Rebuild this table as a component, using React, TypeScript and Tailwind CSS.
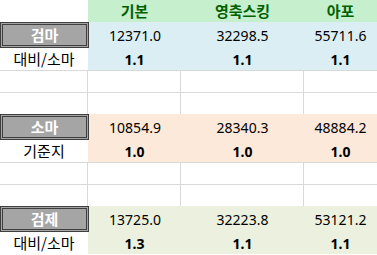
const kr = "font-['Noto_Sans_CJK_KR','Noto_Sans',sans-serif]";
const num = "font-['Noto_Sans','Noto_Sans_CJK_KR',sans-serif]";

const cols = ["w-[88px]", "w-[93px]", "w-[123px]", "w-[73px]"];

type Block = {
  name: string;
  label: string;
  bg: string;
  values: string[];
  ratios: string[];
};

const blocks: Block[] = [
  {
    name: "검마",
    label: "대비/소마",
    bg: "bg-[#daeef3]",
    values: ["12371.0", "32298.5", "55711.6"],
    ratios: ["1.1", "1.1", "1.1"],
  },
  {
    name: "소마",
    label: "기준지",
    bg: "bg-[#fde9d9]",
    values: ["10854.9", "28340.3", "48884.2"],
    ratios: ["1.0", "1.0", "1.0"],
  },
  {
    name: "검제",
    label: "대비/소마",
    bg: "bg-[#ebf1de]",
    values: ["13725.0", "32223.8", "53121.2"],
    ratios: ["1.3", "1.1", "1.1"],
  },
];

const BlankRow = () => (
  <div className="flex h-[22px] border-t border-[#d9d9d9]">
    {cols.map((w, i) => (
      <div key={i} className={`${w} shrink-0 ${i < 3 ? "border-r border-[#d9d9d9]" : ""}`} />
    ))}
  </div>
);

const BlockRows = ({ block }: { block: Block }) => (
  <>
    {/* name row with check-cell style label */}
    <div className="flex h-[26px]">
      <div
        className={`w-[89px] shrink-0 flex items-center justify-center border-[3px] border-double border-[#3f3f3f] bg-[#a5a5a5] text-white font-bold text-[15px] ${kr}`}
      >
        {block.name}
      </div>
      <div className={`flex flex-1 ${block.bg}`}>
        {block.values.map((v, i) => (
          <div
            key={i}
            className={`${i === 0 ? "w-[92px]" : cols[i + 1]} shrink-0 flex items-center justify-center text-[14px] text-black ${num}`}
          >
            {v}
          </div>
        ))}
      </div>
    </div>
    {/* ratio row */}
    <div className="flex h-[22px]">
      <div className={`w-[88px] shrink-0 flex items-center justify-center text-[15px] text-black ${kr}`}>
        {block.label}
      </div>
      <div className={`flex flex-1 ${block.bg}`}>
        {block.ratios.map((r, i) => (
          <div
            key={i}
            className={`${cols[i + 1]} shrink-0 flex items-center justify-center text-[14px] font-bold text-black ${num}`}
          >
            {r}
          </div>
        ))}
      </div>
    </div>
  </>
);

export default function App() {
  return (
    <div className="w-[377px] h-[255px] bg-white overflow-hidden">
      {/* header */}
      <div className="flex h-[22px]">
        <div className="w-[88px] shrink-0" />
        <div className="flex flex-1 bg-[#c6efce]">
          {["기본", "영축스킹", "아포"].map((h, i) => (
            <div
              key={i}
              className={`${cols[i + 1]} shrink-0 flex items-center justify-center text-[15px] font-bold text-[#006100] ${kr}`}
            >
              {h}
            </div>
          ))}
        </div>
      </div>

      {blocks.map((b, i) => (
        <div key={b.name}>
          <BlockRows block={b} />
          {i < blocks.length - 1 && (
            <>
              <BlankRow />
              <BlankRow />
            </>
          )}
        </div>
      ))}
    </div>
  );
}
